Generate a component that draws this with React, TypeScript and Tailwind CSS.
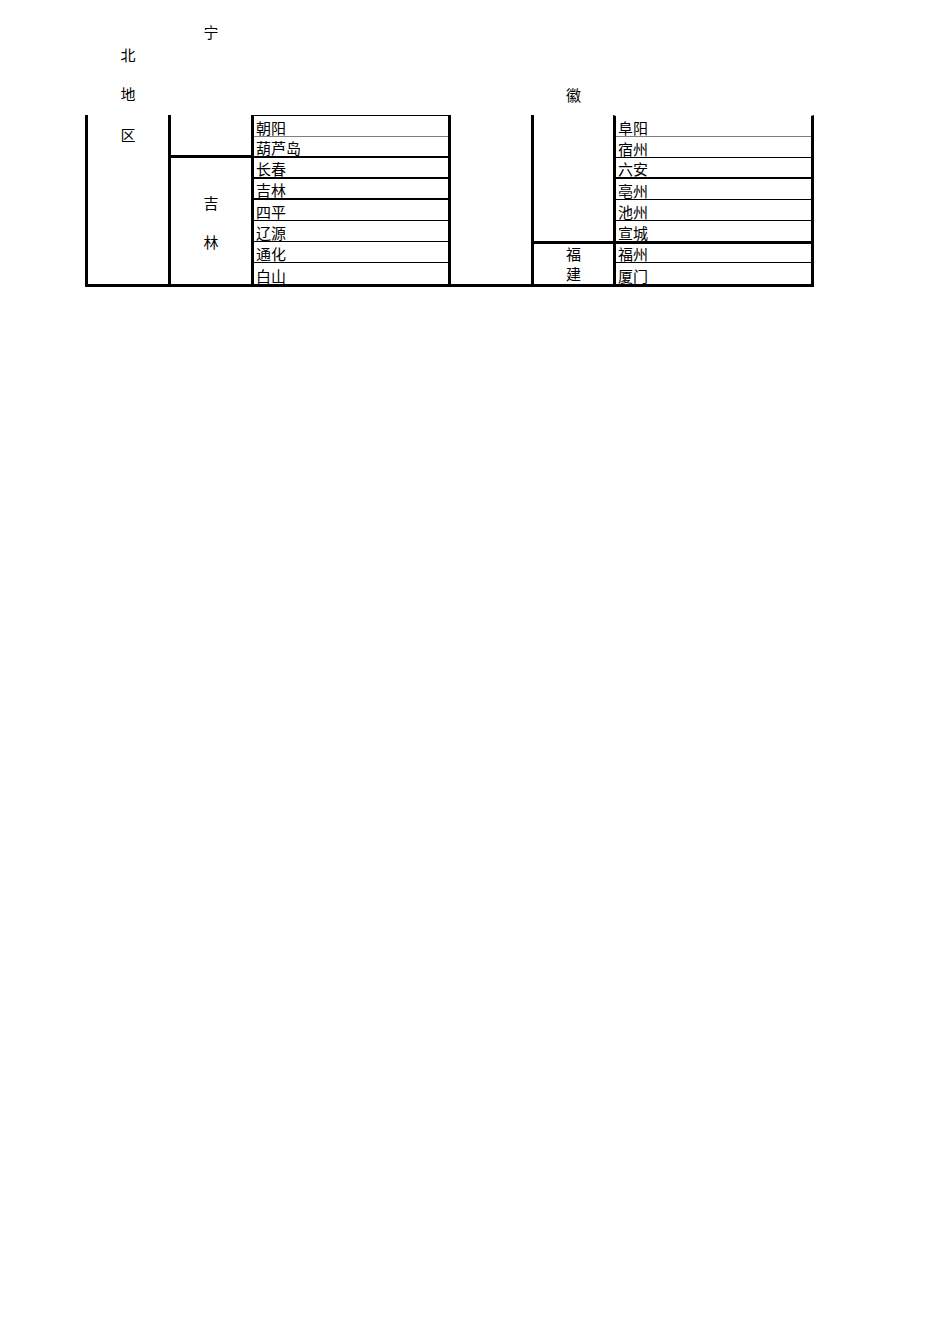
const font = { fontFamily: '"Noto Sans CJK SC", "Liberation Serif", serif' }

function Cell({
  text,
  border,
  h = "h-[21px]",
}: {
  text: string
  border: string
  h?: string
}) {
  return (
    <div className={`flex items-end pl-[2px] ${h} ${border}`}>
      <span className="text-[15px] leading-[16px]">{text}</span>
    </div>
  )
}

const chars = "text-[15px] leading-[15px]"

export default function App() {
  return (
    <div className="h-[1344px] bg-white text-black" style={font}>
      <div className="flex pl-[85px]">
        {/* 东北地区 */}
        <div className="flex w-[83px] flex-col">
          <div className="flex h-[115px] flex-col items-center gap-[24px] pl-[3px] pt-[47px]">
            <span className={chars}>北</span>
            <span className={chars}>地</span>
          </div>
          <div className="flex h-[172px] flex-col items-center border-b-[3px] border-l-[3px] border-black pt-[12px]">
            <span className={chars}>区</span>
          </div>
        </div>

        {/* 辽宁 / 吉林 */}
        <div className="flex w-[83px] flex-col">
          <div className="flex h-[115px] flex-col items-center pl-[3px] pt-[24px]">
            <span className={chars}>宁</span>
          </div>
          <div className="flex h-[172px] flex-col border-b-[3px] border-l-[3px] border-black">
            <div className="h-[43px] border-b-[3px] border-black" />
            <div className="flex flex-1 flex-col items-center gap-[24px] pt-[37px]">
              <span className={chars}>吉</span>
              <span className={chars}>林</span>
            </div>
          </div>
        </div>

        {/* 城市 */}
        <div className="flex w-[197px] flex-col">
          <div className="h-[115px]" />
          <div className="flex h-[172px] flex-col border-b-[3px] border-l-[3px] border-t border-black">
            <Cell text="朝阳" border="border-b border-[#808080]" />
            <Cell text="葫芦岛" border="border-b-2 border-black" />
            <Cell text="长春" border="border-b-2 border-black" />
            <Cell text="吉林" border="border-b-2 border-black" />
            <Cell text="四平" border="border-b border-black" />
            <Cell text="辽源" border="border-b border-black" />
            <Cell text="通化" border="border-b border-black" />
            <Cell text="白山" border="" />
          </div>
        </div>

        {/* 华东地区 */}
        <div className="flex w-[83px] flex-col">
          <div className="h-[115px]" />
          <div className="h-[172px] border-b-[3px] border-l-[3px] border-black" />
        </div>

        {/* 安徽 / 福建 */}
        <div className="flex w-[82px] flex-col">
          <div className="flex h-[115px] flex-col items-center pl-[3px] pt-[87px]">
            <span className={chars}>徽</span>
          </div>
          <div className="flex h-[172px] flex-col border-b-[3px] border-l-[3px] border-black">
            <div className="h-[129px] border-b-[3px] border-black" />
            <div className="flex h-[19px] items-center justify-center">
              <span className={chars}>福</span>
            </div>
            <div className="flex h-[21px] items-center justify-center">
              <span className={chars}>建</span>
            </div>
          </div>
        </div>

        {/* 城市 */}
        <div className="flex w-[201px] flex-col">
          <div className="h-[115px]" />
          <div className="flex h-[172px] flex-col border-x-[3px] border-b-[3px] border-t border-black border-t-transparent">
            <Cell text="阜阳" border="border-b border-[#808080]" />
            <Cell text="宿州" border="border-b border-black" />
            <Cell text="六安" border="border-b-2 border-black" />
            <Cell text="亳州" border="border-b border-black" />
            <Cell text="池州" border="border-b border-black" />
            <Cell text="宣城" border="border-b-[3px] border-black" h="h-[23px]" />
            <Cell text="福州" border="border-b border-black" h="h-[19px]" />
            <Cell text="厦门" border="" />
          </div>
        </div>
      </div>
    </div>
  )
}
